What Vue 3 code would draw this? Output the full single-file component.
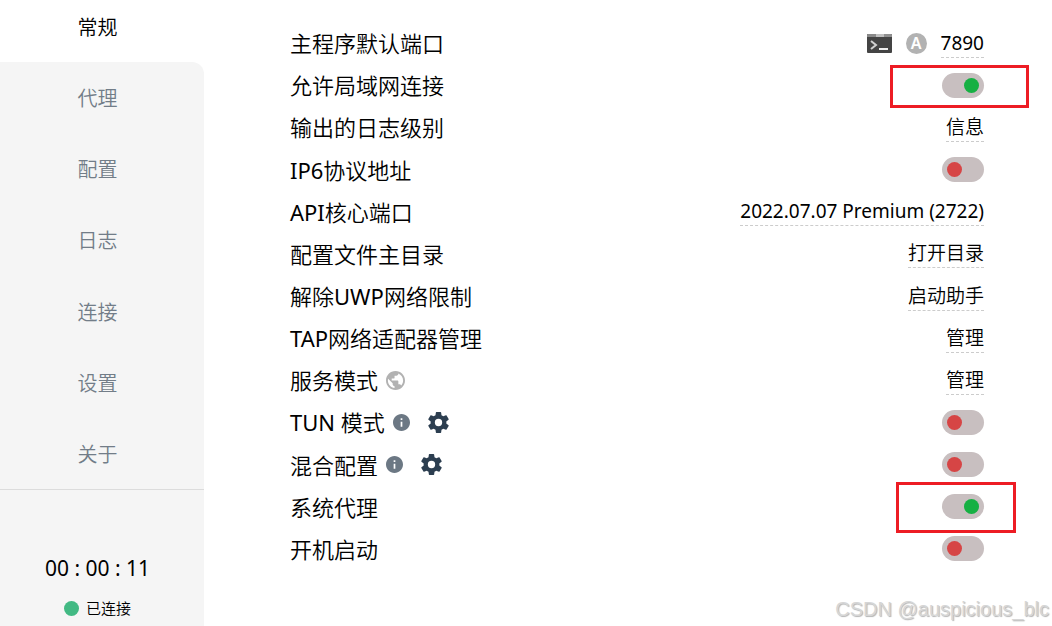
<template>
  <div class="layout">
    <aside class="sidebar">
      <nav class="menu">
        <a
          v-for="item in menus"
          :key="item"
          href="#"
          :class="['menu-item', { active: item === current }]"
          @click.prevent="current = item"
        >{{ item }}</a>
      </nav>
      <div class="status">
        <div class="timer">00 : 00 : 11</div>
        <div class="connection">
          <span class="dot"></span>
          <span>已连接</span>
        </div>
      </div>
    </aside>

    <main class="settings">
      <div v-for="row in rows" :key="row.id" class="row">
        <div class="row-label">
          <component
            :is="row.type === 'switch' ? 'label' : 'span'"
            :id="row.id + '-label'"
            :for="row.type === 'switch' ? row.id : null"
          >
            <span
              v-for="(part, i) in splitLabel(row.label)"
              :key="i"
              :class="{ latin: isLatin(part) }"
            >{{ part }}</span>
          </component>
          <svg v-if="row.globe" class="icon-globe" viewBox="2 2 20 20">
            <path d="M12 2C6.48 2 2 6.48 2 12s4.48 10 10 10 10-4.48 10-10S17.52 2 12 2zm-1 17.93c-3.95-.49-7-3.85-7-7.93 0-.62.08-1.21.21-1.79L9 15v1c0 1.1.9 2 2 2v1.93zm6.9-2.54c-.26-.81-1-1.39-1.9-1.39h-1v-3c0-.55-.45-1-1-1H8v-2h2c.55 0 1-.45 1-1V7h2c1.1 0 2-.9 2-2v-.41c2.93 1.19 5 4.06 5 7.41 0 2.08-.8 3.97-2.1 5.39z" />
          </svg>
          <template v-if="row.gear">
            <svg class="icon-info" viewBox="2 2 20 20">
              <path d="M12 2C6.48 2 2 6.48 2 12s4.48 10 10 10 10-4.48 10-10S17.52 2 12 2zm1 15h-2v-6h2v6zm0-8h-2V7h2v2z" />
            </svg>
            <button class="icon-button gear" type="button" aria-label="设置">
              <svg viewBox="2 2 20 20">
                <path d="M12 15.5A3.5 3.5 0 0 1 8.5 12 3.5 3.5 0 0 1 12 8.5a3.5 3.5 0 0 1 3.5 3.5 3.5 3.5 0 0 1-3.5 3.5m7.43-2.53c.04-.32.07-.64.07-.97s-.03-.66-.07-1l2.11-1.63c.19-.15.24-.42.12-.64l-2-3.46c-.12-.22-.39-.31-.61-.22l-2.49 1c-.52-.39-1.06-.73-1.69-.98l-.37-2.65A.506.506 0 0 0 14 2h-4c-.25 0-.46.18-.5.42l-.37 2.65c-.63.25-1.17.59-1.69.98l-2.49-1c-.22-.09-.49 0-.61.22l-2 3.46c-.13.22-.07.49.12.64L4.57 11c-.04.34-.07.67-.07 1s.03.65.07.97l-2.11 1.66c-.19.15-.25.42-.12.64l2 3.46c.12.22.39.3.61.22l2.49-1.01c.52.4 1.06.74 1.69.99l.37 2.65c.04.24.25.42.5.42h4c.25 0 .46-.18.5-.42l.37-2.65c.63-.26 1.17-.59 1.69-.99l2.49 1.01c.22.08.49 0 .61-.22l2-3.46c.12-.22.07-.49-.12-.64l-2.11-1.66z" />
              </svg>
            </button>
          </template>
        </div>

        <div class="row-control">
          <template v-if="row.port">
            <button class="icon-button terminal" type="button" aria-label="终端">
              <svg viewBox="0 0 25 19">
                <rect width="25" height="19" rx="1" fill="#444" />
                <path d="M0 3V1a1 1 0 0 1 1-1h8v3z" fill="#8a8a8a" />
                <path d="M9 0h8v3H9z" fill="#c0c0c0" />
                <path d="M17 0h7a1 1 0 0 1 1 1v2h-8z" fill="#909090" />
                <path d="M4 7l5 4-5 4" fill="none" stroke="#d0d0d0" stroke-width="2" />
                <path d="M12 14h9v2h-9z" fill="#eee" />
              </svg>
            </button>
            <button class="icon-button auto" type="button">A</button>
          </template>
          <input
            v-if="row.type === 'switch'"
            :id="row.id"
            v-model="row.on"
            class="switch"
            type="checkbox"
          />
          <button
            v-else
            :class="['value', { latin: isLatin(row.value) }]"
            type="button"
            :aria-describedby="row.id + '-label'"
          >{{ row.value }}</button>
        </div>
        <span v-if="row.mark" :class="['mark', row.mark]"></span>
      </div>
    </main>

    <div class="watermark">CSDN @auspicious_blc</div>
  </div>
</template>

<script setup>
import { ref } from 'vue'

const menus = ['常规', '代理', '配置', '日志', '连接', '设置', '关于']
const current = ref('常规')

const rows = ref([
  { id: 'port', label: '主程序默认端口', type: 'text', value: '7890', port: true },
  { id: 'lan', label: '允许局域网连接', type: 'switch', on: true, mark: 'mark-lan' },
  { id: 'log', label: '输出的日志级别', type: 'text', value: '信息' },
  { id: 'ipv6', label: 'IP6协议地址', type: 'switch', on: false },
  { id: 'core', label: 'API核心端口', type: 'text', value: '2022.07.07 Premium (2722)' },
  { id: 'home', label: '配置文件主目录', type: 'text', value: '打开目录' },
  { id: 'uwp', label: '解除UWP网络限制', type: 'text', value: '启动助手' },
  { id: 'tap', label: 'TAP网络适配器管理', type: 'text', value: '管理' },
  { id: 'service', label: '服务模式', type: 'text', value: '管理', globe: true },
  { id: 'tun', label: 'TUN 模式', type: 'switch', on: false, gear: true },
  { id: 'mixin', label: '混合配置', type: 'switch', on: false, gear: true },
  { id: 'proxy', label: '系统代理', type: 'switch', on: true, mark: 'mark-proxy' },
  { id: 'startup', label: '开机启动', type: 'switch', on: false }
])

/**
 * 将标签拆分为西文和中文片段
 */
function splitLabel(label) {
  return label.match(/[\x20-\x7e]+|[^\x20-\x7e]+/g)
}

function isLatin(text) {
  return /^[\x20-\x7e]+$/.test(text)
}
</script>

<style>
body {
  margin: 0;
  background: #fff;
}
</style>

<style scoped>
.layout {
  position: relative;
  display: flex;
  min-height: 100vh;
  overflow: hidden;
  color: #000;
  font-family: "Noto Sans", "Noto Sans CJK SC", sans-serif;
  font-weight: 350;
}

button {
  padding: 0;
  border: 0;
  background: none;
  color: inherit;
  font: inherit;
  cursor: pointer;
}

/* 侧边栏 */
.sidebar {
  display: flex;
  flex-direction: column;
  flex: 0 0 204px;
  background: #fff;
}

.menu {
  display: flex;
  flex-direction: column;
  flex: 1;
  border-bottom: 1px solid #dcdcdc;
}

.menu-item {
  display: flex;
  flex: 1;
  align-items: center;
  justify-content: center;
  padding: 3px 9px 0 0;
  background: #f5f5f5;
  color: #727d88;
  font-size: 20px;
  line-height: 28px;
  text-decoration: none;
}

.menu-item.active {
  flex: 0 0 49px;
  padding-bottom: 10px;
  background: #fff;
  color: #000;
}

.menu-item.active + .menu-item {
  border-top-right-radius: 12px;
}

.status {
  display: flex;
  flex-direction: column;
  align-items: center;
  gap: 14px;
  padding: 64px 9px 6px 0;
  background: #f5f5f5;
}

.timer {
  font-size: 21px;
  line-height: 28px;
  font-weight: 400;
}

.connection {
  display: flex;
  align-items: center;
  gap: 7px;
  font-size: 15px;
  line-height: 24px;
}

.dot {
  width: 15px;
  height: 15px;
  border-radius: 50%;
  background: #42b983;
}

/* 设置列表 */
.settings {
  display: flex;
  flex-direction: column;
  flex: 1;
  padding: 22px 68px 56px 86px;
}

.row {
  position: relative;
  display: flex;
  flex: 1;
  align-items: center;
  justify-content: space-between;
}

.row-label {
  display: flex;
  align-items: center;
  gap: 8px;
  font-size: 22px;
  line-height: 32px;
  white-space: pre;
}

.row-control {
  display: flex;
  align-items: center;
  gap: 14px;
}

.latin {
  font-weight: 400;
}

.value {
  padding: 1px 0;
  border-bottom: 1px dashed #ccc;
  font-size: 19px;
  line-height: 26px;
}

.switch {
  appearance: none;
  width: 42px;
  height: 25px;
  margin: 0;
  padding: 5px;
  box-sizing: border-box;
  border-radius: 13px;
  background: #c8bfc0;
  cursor: pointer;
}

.switch::before {
  content: "";
  display: block;
  width: 15px;
  height: 15px;
  border-radius: 50%;
  background: #d64545;
}

.switch:checked::before {
  margin-left: auto;
  background: #16b043;
}

/* 图标 */
.icon-globe {
  width: 19px;
  height: 19px;
  fill: #b2b2b2;
}

.icon-info {
  width: 17px;
  height: 17px;
  fill: #6c7884;
}

.icon-button svg {
  display: block;
  width: 100%;
  height: 100%;
}

.gear {
  width: 21px;
  height: 21px;
  margin-left: 10px;
  fill: #2c3e50;
}

.terminal {
  width: 25px;
  height: 19px;
}

.auto {
  width: 21px;
  height: 21px;
  border-radius: 50%;
  background: #b2b2b2;
  color: #fff;
  font-size: 16px;
  font-weight: 600;
  line-height: 21px;
}

/* 红色标注框 */
.mark {
  position: absolute;
  box-sizing: border-box;
  border: 3px solid #ed1c24;
  pointer-events: none;
}

.mark-lan {
  top: 1px;
  right: -45px;
  width: 139px;
  height: 43px;
}

.mark-proxy {
  top: -4px;
  right: -32px;
  width: 120px;
  height: 51px;
}

.watermark {
  position: absolute;
  right: 3px;
  bottom: 4px;
  color: #d6d6d6;
  font-family: "Liberation Sans", sans-serif;
  font-size: 20px;
  font-weight: 400;
  line-height: 26px;
  text-shadow: 1px 1px 1px #b4b4b4;
}
</style>
